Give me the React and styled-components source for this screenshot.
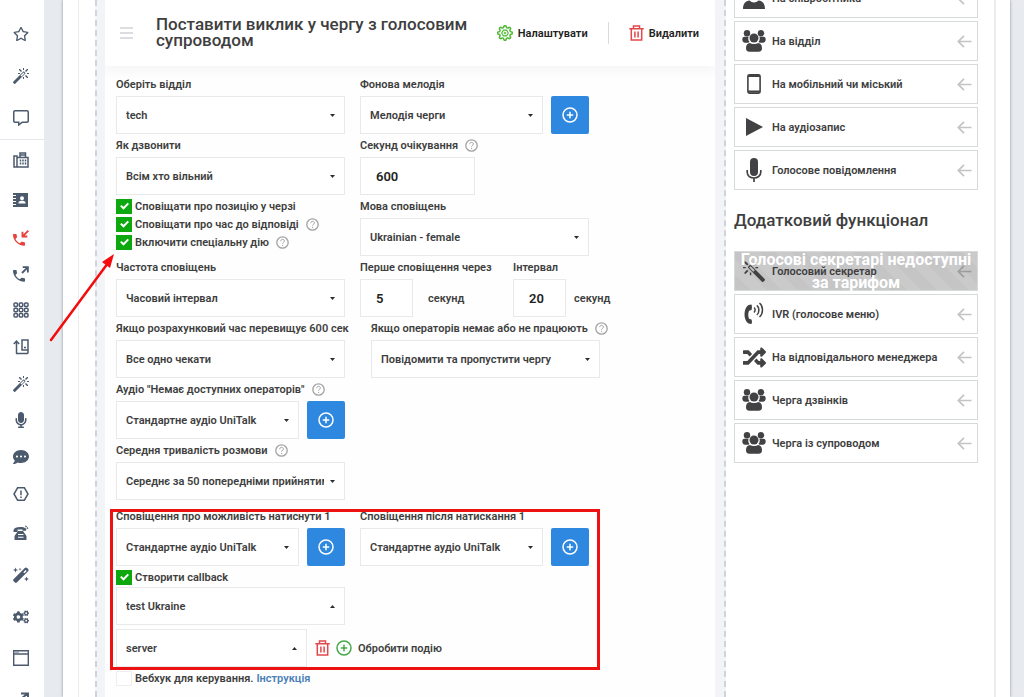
import React, { useId } from "react";
import styled, { createGlobalStyle } from "styled-components";
import { FaCogs, FaCommentDots, FaMicrophone, FaRandom, FaRegCommentAlt, FaRegStar } from "react-icons/fa";
import { ImMagicWand } from "react-icons/im";

const GlobalStyle = createGlobalStyle`
  *, *::before, *::after { box-sizing: border-box; }
  body {
    margin: 0;
    background: #e7ebf0;
    color: #3e3e40;
    font-family: Roboto, "Noto Sans", sans-serif;
    font-size: 11px;
    font-weight: 600;
  }
  button, input, select { font: inherit; color: inherit; }
`;

/* ---------- layout ---------- */

const Shell = styled.div`
  display: grid;
  grid-template-columns: 44px minmax(0, 1fr);
  height: 100vh;
  overflow: hidden;
`;

const Sidebar = styled.nav`
  display: flex;
  flex-direction: column;
  background: #fff;
  overflow: hidden;
`;

const NavGroup = styled.div`
  display: flex;
  flex-direction: column;
  padding-top: ${(p) => (p.$first ? "13px" : "0")};
  border-bottom: ${(p) => (p.$first ? "1px solid #e4e7eb" : "none")};
`;

const NavLink = styled.a`
  display: flex;
  flex: none;
  align-items: center;
  height: ${(p) => p.$h}px;
  padding-left: 13px;
  color: ${(p) => (p.$active ? "#e8403c" : "#4c5a6e")};
  svg { width: 16px; height: 16px; }
`;

const Main = styled.main`
  padding: 0 14px 0 19px;
  overflow: hidden;
`;

const Sheet = styled.div`
  height: 100%;
  padding: 0 14px 0 15px;
  background: #fff;
  box-shadow: 0 0 3px #8d949e;
`;

const Inner = styled.div`
  display: flex;
  gap: 8px;
  height: 100%;
  padding: 0 16px;
  border: solid #ececef;
  border-width: 0 2px 0 1px;
`;

const Canvas = styled.section`
  flex: 1;
  min-width: 0;
  height: 100%;
  padding: 0 9px 0 8px;
  border: dashed #d0d3dc;
  border-width: 0 2px;
  background: #f3f4f8;
`;

const Card = styled.article`
  height: 100%;
  background: #fefefe;
`;

const CardHeader = styled.header`
  display: flex;
  align-items: center;
  height: 66px;
  padding: 0 16px 0 15px;
  background: #fff;
  box-shadow: 0 4px 12px #f3f3f4;
`;

const DragHandle = styled.button`
  display: grid;
  gap: 3px;
  width: 13px;
  margin-right: 23px;
  padding: 0;
  border: 0;
  background: none;
  &::before, &::after, & > span { content: ""; height: 2px; background: #dcdde1; }
`;

const Title = styled.h1`
  flex: 1;
  margin: 0;
  padding-bottom: 2px;
  font-size: 17px;
  font-weight: 500;
  line-height: 16px;
`;

const HeaderAction = styled.button`
  display: flex;
  align-items: center;
  gap: 5px;
  padding: 0;
  border: 0;
  background: none;
  color: #222;
  white-space: nowrap;
`;

const Divider = styled.span`
  width: 1px;
  height: 22px;
  margin: 0 20px;
  background: #d9dade;
`;

const Form = styled.form`
  display: flex;
  flex-direction: column;
  padding: 7px 11px 0;
`;

const Row = styled.div`
  display: flex;
  align-items: flex-start;
  gap: 15px;
`;

const Highlight = styled.div`
  position: relative;
  margin-top: 5px;
  &::after {
    content: "";
    position: absolute;
    inset: 4px 104px -3px -6px;
    border: 3px solid #ee1111;
    pointer-events: none;
  }
`;

/* ---------- form parts ---------- */

const FieldBox = styled.div`
  flex: none;
  min-width: ${(p) => p.$min || 229}px;
`;

const Label = styled.div`
  display: flex;
  align-items: center;
  gap: 7px;
  height: 23px;
  white-space: nowrap;
`;

const Line = styled.div`
  display: flex;
  align-items: center;
  gap: ${(p) => p.$gap || 8}px;
`;

const SelectBox = styled.div`
  display: grid;
  align-items: center;
  width: ${(p) => p.$w || 229}px;
  & > * { grid-area: 1 / 1; }
  & > svg { justify-self: end; margin-right: 10px; pointer-events: none; }
`;

const NativeSelect = styled.select`
  width: 100%;
  height: 38px;
  padding: 0 20px 0 9px;
  border: 1px solid #e9e9eb;
  border-radius: 0;
  appearance: none;
  background: #fff;
`;

const NumberInput = styled.input`
  width: ${(p) => p.$w}px;
  height: 38px;
  padding: 1px 15px 0;
  border: 1px solid #e9e9eb;
  background: #fff;
  color: #222;
  font-size: 13px;
  font-weight: 600;
`;

const AddButton = styled.button`
  display: grid;
  place-items: center;
  flex: none;
  width: 38px;
  height: 38px;
  padding: 0;
  border: 0;
  border-radius: 2px;
  background: #2f88df;
  color: #fff;
`;

const IconButton = styled.button`
  display: grid;
  padding: 0;
  border: 0;
  background: none;
`;

const HelpButton = styled(IconButton)`
  color: #a3a3a6;
`;

const CheckList = styled.div`
  display: flex;
  flex-direction: column;
  gap: 2px;
  width: 229px;
  padding-top: 3px;
`;

const CheckRow = styled.div`
  display: flex;
  align-items: center;
  gap: 3px;
  height: 16px;
  white-space: nowrap;
  & > button { margin-left: 4px; }
`;

const CheckBox = styled.span`
  display: grid;
  place-items: center;
  & > * { grid-area: 1 / 1; }
  & > svg { pointer-events: none; }
`;

const NativeCheck = styled.input`
  width: 16px;
  height: 15px;
  margin: 0;
  appearance: none;
  border: 1px solid #eeeef0;
  background: #fff;
  &:checked { border-color: #0da80d; background: #0da80d; }
  & + svg { visibility: hidden; }
  &:checked + svg { visibility: visible; }
`;

const CheckSection = styled.div`
  padding: 3px 0 2px;
`;

const ServerRow = styled(Line)`
  margin-top: 4px;
`;

const EventTools = styled.div`
  display: flex;
  align-items: center;
  gap: 6px;
`;

const Guide = styled.a`
  color: #4a7fb8;
  text-decoration: none;
`;

/* ---------- right column ---------- */

const Aside = styled.aside`
  flex: none;
  width: 244px;
  margin-top: -22px;
`;

const BlockList = styled.div`
  display: flex;
  flex-direction: column;
  gap: 3px;
`;

const AsideTitle = styled.h2`
  margin: 20px 0 21px;
  font-size: 17px;
  font-weight: 500;
  line-height: 20px;
`;

const Block = styled.button`
  position: relative;
  display: flex;
  align-items: center;
  width: 100%;
  height: 40px;
  padding: 0 5px 0 7px;
  border: 1px solid #d6dadb;
  background: ${(p) =>
    p.$locked ? "repeating-linear-gradient(45deg, #c5c5c6 0 11px, #cacacb 11px 22px)" : "#fff"};
  text-align: left;
  white-space: nowrap;
`;

const BlockIcon = styled.span`
  display: grid;
  flex: none;
  width: 24px;
  margin-right: 6px;
  place-items: center;
  color: #424244;
`;

const BlockText = styled.span`
  flex: 1;
`;

const LockNote = styled.strong`
  position: absolute;
  inset: -4px 0 0;
  color: #fff;
  font-size: 16px;
  font-weight: 700;
  line-height: 23px;
  text-align: center;
  white-space: normal;
`;

const Pointer = styled.svg`
  position: absolute;
  left: 48px;
  top: 252px;
`;

/* ---------- icons ---------- */

const line = { fill: "none", stroke: "currentColor", strokeWidth: 1.5 };

const Flipped = styled(ImMagicWand)`
  transform: scaleX(-1);
`;

const Fax = () => (
  <svg viewBox="0 0 16 16" {...line}>
    <path d="M1 4h3v11H1zM4 5.5h11V15H4M7 5.5V1h5.5v4.5M7 3h5" />
    <path d="M7.5 7.5v5M10 7.5v5M12.5 7.5v5" strokeDasharray="2 1" />
  </svg>
);
const Contacts = () => (
  <svg viewBox="0 0 16 16">
    <path fill="currentColor" fillRule="evenodd" d="M3 1h12v14H3zM9 4.2a2 2 0 1 0 0 4 2 2 0 0 0 0-4zM5.5 11.5h7v-.8c0-1.6-2-2-3.500-2s-3.500.4-3.500 2z" />
    <path d="M1.500 1v14" stroke="currentColor" strokeWidth="3" strokeDasharray="2 1" />
  </svg>
);
const handset = "M6.620 10.790c1.440 2.830 3.760 5.140 6.590 6.590l2.200-2.200c.27-.27.67-.36 1.020-.24 1.120.37 2.330.57 3.570.57.55 0 1 .45 1 1V20c0 .55-.45 1-1 1-9.390 0-17-7.610-17-17 0-.55.45-1 1-1h3.500c.55 0 1 .45 1 1 0 1.250.2 2.450.57 3.570.11.35.03.74-.25 1.020z";
const CallIn = () => (
  <svg viewBox="0 0 24 24">
    <path fill="currentColor" transform="translate(-3 3) scale(1 .98)" d={handset} />
    <path d="M23 1L14.500 9.500M14.200 2.500v7.300h7.300" fill="none" stroke="currentColor" strokeWidth="2.800" />
  </svg>
);
const CallOut = () => (
  <svg viewBox="0 0 24 24">
    <path fill="currentColor" transform="translate(-3 3) scale(1 .98)" d={handset} />
    <path d="M13.500 10.500L22 2M14.500 1.700h7.800v8" fill="none" stroke="currentColor" strokeWidth="2.800" />
  </svg>
);
const Keypad = () => (
  <svg viewBox="0 0 16 16" {...line}>
    {[1, 6.250, 11.500].map((y) => [1, 6.250, 11.500].map((x) => <rect key={`${x}-${y}`} x={x} y={y} width="3.500" height="3.500" rx="1" />))}
  </svg>
);
const Transfer = () => (
  <svg viewBox="0 0 16 16" {...line}>
    <path d="M3.500 14.800V2M.8 5l2.700-3 2.700 3M3 14.500h12M9 1h6v10H9zM11 8.500h2M15 11v3.500" />
  </svg>
);
const HexAlert = () => (
  <svg viewBox="0 0 16 16" {...line}>
    <path d="M4.600 1.800h6.800L15 8l-3.600 6.200H4.600L1 8zM8 4.500v4.700M8 10.500v1.500" />
  </svg>
);
const DeskPhone = () => (
  <svg viewBox="0 0 16 16" fill="currentColor">
    <path d="M.5 7V5.200C1 2.800 3.700 2 7 2s5.600.6 6 2.200v1.600H9.500V4.600H4.600V7z" />
    <path fillRule="evenodd" d="M5 6h5l3.500 5v4h-12v-4zM5 9h5.500v1H5zM5 11.800h5.500v1H5z" />
    <path d="M12 1c1.600.2 2.600 1.200 2.800 3M12.500 3.200c.5.200.8.500.9 1.100" fill="none" stroke="currentColor" />
  </svg>
);
const StarWand = () => (
  <svg viewBox="0 0 16 16" fill="currentColor">
    <path fillRule="evenodd" d="M.5 12.300L11.800 1q1.200-1 2.300 0l1 1q1 1.100 0 2.300L3.800 15.500q-1 .8-1.900 0l-1.400-1.400q-.8-.9 0-1.800zM10.300 5.200l1.100 1.100 2.300-2.300-1.100-1.100z" />
    <path d="M2.500.5l.7 1.800 1.800.7-1.800.7-.7 1.800-.7-1.800L0 3l1.800-.7zM13.500 9.500l.7 1.800 1.800.7-1.800.7-.7 1.800-.7-1.800L11 12l1.800-.7zM7 .8l.4 1 1 .4-1 .4-.4 1-.4-1-1-.4 1-.4z" />
  </svg>
);
const Window = () => (
  <svg viewBox="0 0 16 16" {...line} strokeWidth="1.400">
    <path d="M.7.8h14.600v14.400H.7zM.7 4h14.600M2.500 2.400h1M4.500 2.400h1" />
  </svg>
);
const Diag = () => (
  <svg viewBox="0 0 16 16" {...line} strokeWidth="2">
    <path d="M2 14L14 4M8 3.500h7V9" />
  </svg>
);
const Help = () => (
  <svg width="13" height="13" viewBox="0 0 13 13" fill="none" stroke="currentColor">
    <circle cx="6.500" cy="6.500" r="5.700" strokeWidth="1.300" />
    <path d="M4.700 5.200c0-2.500 3.700-2.400 3.700-.2 0 1.300-1.800 1.300-1.800 2.700M6.600 8.900v1.200" />
  </svg>
);
const Plus = ({ color = "currentColor" }) => (
  <svg width="16" height="16" viewBox="0 0 16 16" fill="none" stroke={color} strokeWidth="1.500">
    <circle cx="8" cy="8" r="7" />
    <path d="M8 4.800v6.400M4.800 8h6.400" />
  </svg>
);
const Trash = () => (
  <svg width="15" height="16" viewBox="0 0 15 16" fill="none" stroke="#e2484a" strokeWidth="1.500">
    <path d="M.3 3.700h14.400M4.500 3.500V1h6v2.500M2.300 4v11h10.400V4M5.900 6.500v6M9.100 6.500v6" />
  </svg>
);
const Gear = () => {
  const points = Array.from({ length: 80 }, (_, i) => {
    const a = (i / 80) * Math.PI * 2;
    const r = 6.400 + 0.9 * Math.tanh(2.500 * Math.cos(a * 8));
    return `${(8 + r * Math.cos(a)).toFixed(2)},${(8 + r * Math.sin(a)).toFixed(2)}`;
  }).join(" ");
  return (
    <svg width="16" height="16" viewBox="0 0 16 16" fill="none" stroke="#4fb832" strokeWidth="1.500">
      <polygon points={points} />
      <path d="M6.400 5.100h3.200L11.300 8l-1.700 2.900H6.400L4.700 8z" strokeWidth="1.100" />
      <circle cx="8" cy="8" r=".9" strokeWidth="1" />
    </svg>
  );
};
const Caret = ({ up }) => (
  <svg width="5" height="3" viewBox="0 0 5 3">
    <path d={up ? "M0 3h5L2.500 0z" : "M0 0h5L2.500 3z"} fill="#2c2c2e" />
  </svg>
);
const Tick = () => (
  <svg width="9" height="8" viewBox="0 0 9 8" fill="none" stroke="#fff" strokeWidth="2">
    <path d="M.8 3.600l2.700 2.700L8.300 1.400" />
  </svg>
);
const BackArrow = () => (
  <svg width="15" height="13" viewBox="0 0 15 13" fill="none" stroke="currentColor" strokeWidth="1.700" opacity=".3">
    <path d="M14.500 6.500H1.500M7 .8L1.300 6.500 7 12.200" />
  </svg>
);
const Person = () => (
  <svg width="24" height="24" viewBox="0 0 24 24" fill="currentColor">
    <circle cx="12" cy="7" r="6" />
    <path d="M1 23c0-6 3-8 6.500-8.500 2.500 2.500 6.500 2.500 9 0C20 15 23 17 23 23z" />
  </svg>
);
const Group = () => (
  <svg width="24" height="22" viewBox="0 0 24 22" fill="currentColor">
    <circle cx="5" cy="3.300" r="3.200" />
    <circle cx="19" cy="3.300" r="3.200" />
    <path d="M.3 9.500c0-2 .8-2.800 2-2.800h4.300A5.500 5.500 0 0 0 7.500 12l-1.200.7H3.200C1.300 12.700.3 11.500.3 9.500zM23.700 9.500c0-2-.8-2.800-2-2.800h-4.300a5.500 5.500 0 0 1-.9 5.300l1.200.7h3.100c1.900 0 2.900-1.200 2.900-3.200z" />
    <circle cx="12" cy="8" r="4.500" />
    <path d="M4 18c0-3 1.300-4.800 4-5.100 2 1.300 6 1.300 8 0 2.700.3 4 2.100 4 5.100 0 2.500-1 3.800-3.500 3.800h-9C5 21.800 4 20.500 4 18z" />
  </svg>
);
const Mobile = () => (
  <svg width="14" height="20" viewBox="0 0 14 20" fill="none" stroke="currentColor" strokeWidth="1.600">
    <rect x=".9" y=".9" width="12.200" height="18.200" rx="1.500" />
    <path d="M1 2h12M1 17.400h12" strokeWidth="2" />
  </svg>
);
const Play = () => (
  <svg width="18" height="20" viewBox="0 0 18 20">
    <path d="M1 1l17 9-17 9z" fill="currentColor" />
  </svg>
);
const Mic = () => (
  <svg width="16" height="24" viewBox="0 0 16 24">
    <rect x="4" y="0" width="8" height="18" rx="4" fill="currentColor" />
    <path d="M1.200 12v2c0 8 13.600 8 13.600 0v-2M8 20v4" fill="none" stroke="currentColor" strokeWidth="1.700" />
  </svg>
);
const Ivr = () => (
  <svg width="20" height="24" viewBox="0 0 20 24">
    <path d="M7.500 2.500L4.500 3C1.500 5 .5 9 .5 12.500S2 20 4.500 21.500l3 .5c.5-1 .7-3 0-4.500l-2.500-.8c-1-2.500-1-5.500 0-8l2.500-.8c.7-1.500.5-4.200 0-5.400z" fill="currentColor" />
    <path d="M10 5.500c1.500 1 1.500 3.500 0 5M12.800 3.300c2.800 2 2.800 7.500 0 9.700M15.500 1c4 3.500 4 10.500 0 14" fill="none" stroke="currentColor" strokeWidth="1.500" />
  </svg>
);

/* ---------- composed parts ---------- */

const HelpMark = () => (
  <HelpButton type="button" aria-label="Довідка"><Help /></HelpButton>
);

function Select({ id, value, w, up, label }) {
  return (
    <SelectBox $w={w}>
      <NativeSelect id={id} aria-label={label} defaultValue={value}>
        <option>{value}</option>
      </NativeSelect>
      <Caret up={up} />
    </SelectBox>
  );
}

function SelectField({ label, value, help, add, min }) {
  const id = useId();
  return (
    <FieldBox $min={min}>
      <Label><label htmlFor={id}>{label}</label>{help && <HelpMark />}</Label>
      <Line>
        <Select id={id} value={value} w={add ? 183 : 229} />
        {add && <AddButton type="button" aria-label="Додати"><Plus /></AddButton>}
      </Line>
    </FieldBox>
  );
}

function NumberField({ label, value, w, min, unit, gap, help }) {
  const id = useId();
  return (
    <FieldBox $min={min}>
      <Label><label htmlFor={id}>{label}</label>{help && <HelpMark />}</Label>
      <Line $gap={gap}>
        <NumberInput id={id} $w={w} defaultValue={value} inputMode="numeric" />
        {unit && <span>{unit}</span>}
      </Line>
    </FieldBox>
  );
}

function Check({ label, checked, help, children }) {
  const id = useId();
  return (
    <CheckRow>
      <CheckBox>
        <NativeCheck id={id} type="checkbox" defaultChecked={checked} />
        <Tick />
      </CheckBox>
      <label htmlFor={id}>{label}</label>
      {children}
      {help && <HelpMark />}
    </CheckRow>
  );
}

const topNav = [
  ["Обране", FaRegStar, 42],
  ["Майстер", Flipped, 42],
  ["Чат", FaRegCommentAlt, 42],
];
const nav = [
  ["Факс", Fax, 40],
  ["Контакти", Contacts, 40],
  ["Вхідні", CallIn, 36, true],
  ["Вихідні", CallOut, 36],
  ["Номери", Keypad, 36],
  ["Переадресація", Transfer, 37],
  ["Сценарії", Flipped, 37],
  ["Записи", FaMicrophone, 36],
  ["Повідомлення", FaCommentDots, 37],
  ["Сповіщення", HexAlert, 37],
  ["Телефонія", DeskPhone, 42],
  ["Автоматизація", StarWand, 42],
  ["Налаштування", FaCogs, 41],
  ["Віджет", Window, 41],
  ["Вихід", Diag, 40],
];
const NavItems = ({ items }) =>
  items.map(([name, Icon, h, active]) => (
    <NavLink key={name} href="#" aria-label={name} $h={h} $active={active}><Icon /></NavLink>
  ));

const WandIcon = () => <ImMagicWand size={22} />;
const ShuffleIcon = () => <FaRandom size={23} />;
const redirects = [
  ["На співробітника", Person],
  ["На відділ", Group],
  ["На мобільний чи міський", Mobile],
  ["На аудіозапис", Play],
  ["Голосове повідомлення", Mic],
];
const extras = [
  ["Голосовий секретар", WandIcon, "Голосові секретарі недоступні за тарифом"],
  ["IVR (голосове меню)", Ivr],
  ["На відповідального менеджера", ShuffleIcon],
  ["Черга дзвінків", Group],
  ["Черга із супроводом", Group],
];
const Blocks = ({ items }) => (
  <BlockList>
    {items.map(([name, Icon, note]) => (
      <Block key={name} type="button" $locked={!!note}>
        <BlockIcon><Icon /></BlockIcon>
        <BlockText>{name}</BlockText>
        <BackArrow />
        {note && <LockNote>{note}</LockNote>}
      </Block>
    ))}
  </BlockList>
);

export default function App() {
  return (
    <>
      <GlobalStyle />
      <Shell>
        <Sidebar>
          <NavGroup $first><NavItems items={topNav} /></NavGroup>
          <NavGroup><NavItems items={nav} /></NavGroup>
        </Sidebar>
        <Main>
          <Sheet>
            <Inner>
              <Canvas>
                <Card>
                  <CardHeader>
                    <DragHandle aria-label="Перемістити"><span /></DragHandle>
                    <Title>Поставити виклик у чергу з голосовим супроводом</Title>
                    <HeaderAction><Gear />Налаштувати</HeaderAction>
                    <Divider />
                    <HeaderAction><Trash />Видалити</HeaderAction>
                  </CardHeader>
                  <Form>
                    <Row>
                      <SelectField label="Оберіть відділ" value="tech" />
                      <SelectField label="Фонова мелодія" value="Мелодія черги" add />
                    </Row>
                    <Row>
                      <SelectField label="Як дзвонити" value="Всім хто вільний" />
                      <NumberField label="Секунд очікування" value="600" w={115} help />
                    </Row>
                    <Row>
                      <CheckList>
                        <Check label="Сповіщати про позицію у черзі" checked />
                        <Check label="Сповіщати про час до відповіді" checked help />
                        <Check label="Включити спеціальну дію" checked help />
                      </CheckList>
                      <SelectField label="Мова сповіщень" value="Ukrainian - female" />
                    </Row>
                    <Row>
                      <SelectField label="Частота сповіщень" value="Часовий інтервал" />
                      <NumberField label="Перше сповіщення через" value="5" w={53} min={138} unit="секунд" gap={15} />
                      <NumberField label="Інтервал" value="20" w={53} min={100} unit="секунд" gap={8} />
                    </Row>
                    <Row>
                      <SelectField label="Якщо розрахунковий час перевищує 600 сек" value="Все одно чекати" min={240} />
                      <SelectField label="Якщо операторів немає або не працюють" value="Повідомити та пропустити чергу" help />
                    </Row>
                    <SelectField label={'Аудіо "Немає доступних операторів"'} value="Стандартне аудіо UniTalk" help add />
                    <SelectField label="Середня тривалість розмови" value="Середнє за 50 попередніми прийнятими" help />
                    <Highlight>
                      <Row>
                        <SelectField label="Сповіщення про можливість натиснути 1" value="Стандартне аудіо UniTalk" add />
                        <SelectField label="Сповіщення після натискання 1" value="Стандартне аудіо UniTalk" add />
                      </Row>
                      <CheckSection><Check label="Створити callback" checked /></CheckSection>
                      <Select label="Callback" value="test Ukraine" up />
                      <ServerRow>
                        <Select label="Подія" value="server" w={191} up />
                        <EventTools>
                          <IconButton type="button" aria-label="Видалити подію"><Trash /></IconButton>
                          <IconButton type="button" aria-label="Додати подію"><Plus color="#45a84a" /></IconButton>
                          <span>Обробити подію</span>
                        </EventTools>
                      </ServerRow>
                    </Highlight>
                    <CheckSection>
                      <Check label="Вебхук для керування."><Guide href="#">Інструкція</Guide></Check>
                    </CheckSection>
                  </Form>
                </Card>
              </Canvas>
              <Aside>
                <Blocks items={redirects} />
                <AsideTitle>Додатковий функціонал</AsideTitle>
                <Blocks items={extras} />
              </Aside>
            </Inner>
          </Sheet>
        </Main>
      </Shell>
      <Pointer width="70" height="92" viewBox="0 0 70 92" aria-hidden="true">
        <path d="M3 88L60 11" stroke="#f40b0b" strokeWidth="2.500" strokeLinecap="round" />
        <path d="M66 2l-4 14-8-6z" fill="#f40b0b" />
      </Pointer>
    </>
  );
}
